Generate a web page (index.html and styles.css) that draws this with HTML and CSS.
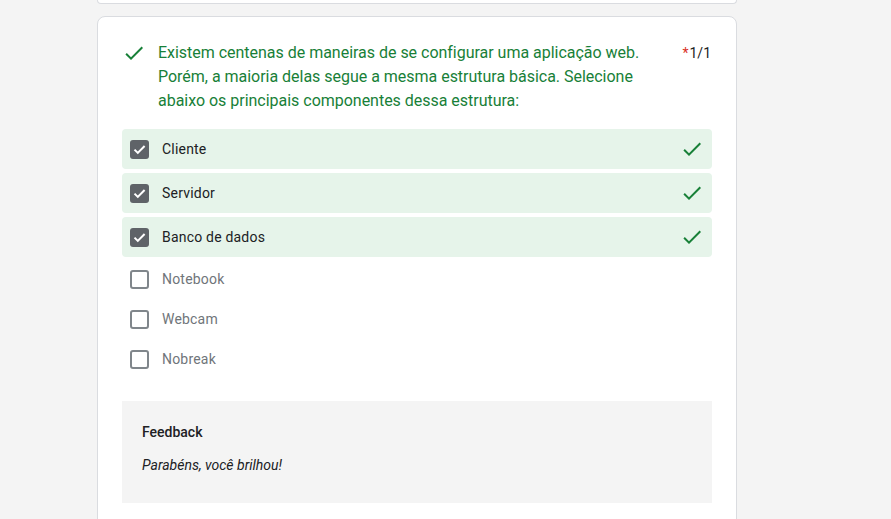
FILE: index.html
```html
<!DOCTYPE html>
<html lang="pt">
<head>
<meta charset="utf-8">
<link rel="stylesheet" href="styles.css">
</head>
<body>
<div class="column">
  <div class="card-prev"></div>
  <div class="card">
    <div class="q-head">
      <svg class="q-icon" viewBox="0 0 24 24" width="24" height="24"><path d="M9 16.17L4.83 12l-1.42 1.41L9 19 21 7l-1.41-1.41z" fill="#188038"/></svg>
      <div class="q-title">Existem centenas de maneiras de se configurar uma aplicação web. Porém, a maioria delas segue a mesma estrutura básica. Selecione abaixo os principais componentes dessa estrutura:</div>
      <div class="q-points"><span class="req">*</span>1/1</div>
    </div>
    <div class="options">
      <div class="opt correct">
        <span class="box checked"><svg viewBox="0 0 19 19" width="19" height="19"><path d="M4.5 9.6l3.3 3.3 6.8-6.9" fill="none" stroke="#fff" stroke-width="2"/></svg></span>
        <span class="label">Cliente</span>
        <svg class="mark" viewBox="0 0 24 24" width="24" height="24"><path d="M9 16.17L4.83 12l-1.42 1.41L9 19 21 7l-1.41-1.41z" fill="#188038"/></svg>
      </div>
      <div class="opt correct">
        <span class="box checked"><svg viewBox="0 0 19 19" width="19" height="19"><path d="M4.5 9.6l3.3 3.3 6.8-6.9" fill="none" stroke="#fff" stroke-width="2"/></svg></span>
        <span class="label">Servidor</span>
        <svg class="mark" viewBox="0 0 24 24" width="24" height="24"><path d="M9 16.17L4.83 12l-1.42 1.41L9 19 21 7l-1.41-1.41z" fill="#188038"/></svg>
      </div>
      <div class="opt correct">
        <span class="box checked"><svg viewBox="0 0 19 19" width="19" height="19"><path d="M4.5 9.6l3.3 3.3 6.8-6.9" fill="none" stroke="#fff" stroke-width="2"/></svg></span>
        <span class="label">Banco de dados</span>
        <svg class="mark" viewBox="0 0 24 24" width="24" height="24"><path d="M9 16.17L4.83 12l-1.42 1.41L9 19 21 7l-1.41-1.41z" fill="#188038"/></svg>
      </div>
      <div class="opt">
        <span class="box"></span>
        <span class="label muted">Notebook</span>
      </div>
      <div class="opt">
        <span class="box"></span>
        <span class="label muted">Webcam</span>
      </div>
      <div class="opt">
        <span class="box"></span>
        <span class="label muted">Nobreak</span>
      </div>
    </div>
    <div class="feedback">
      <div class="fb-title">Feedback</div>
      <div class="fb-text">Parabéns, você brilhou!</div>
    </div>
  </div>
</div>
</body>
</html>
```
FILE: styles.css
```css
html, body {
  margin: 0;
  padding: 0;
  background: #f4f4f4;
  font-family: Roboto, "Liberation Sans", Arial, sans-serif;
  color: #202124;
}
body {
  height: 519px;
  overflow: hidden;
}
.column {
  width: 640px;
  margin-left: 97px;
  display: flex;
  flex-direction: column;
}
.card-prev {
  height: 3px;
  background: #fff;
  border: 1px solid #dadce0;
  border-top: none;
  border-radius: 0 0 8px 8px;
  margin-bottom: 12px;
}
.card {
  background: #fff;
  border: 1px solid #dadce0;
  border-radius: 8px;
  padding: 24px 24px 40px;
}
.q-head {
  display: flex;
  align-items: flex-start;
}
.q-icon {
  flex: none;
  margin-right: 12px;
}
.q-title {
  width: 500px;
  font-size: 16px;
  line-height: 24px;
  color: #188038;
  letter-spacing: -0.02px;
}
.q-points {
  margin-left: auto;
  font-size: 14px;
  line-height: 24px;
  color: #202124;
  padding-right: 1px;
}
.req {
  color: #d93025;
  margin-right: 1px;
}
.options {
  margin-top: 16px;
  display: flex;
  flex-direction: column;
  gap: 4px;
}
.opt {
  display: flex;
  align-items: center;
  height: 36px;
  padding: 0 8px 0 8px;
  border-radius: 4px;
}
.opt.correct {
  height: 40px;
  background: #e6f4ea;
}
.box {
  flex: none;
  width: 19px;
  height: 19px;
  box-sizing: border-box;
  border: 2px solid #80868b;
  border-radius: 3px;
  margin-right: 13px;
}
.box.checked {
  border: none;
  background: #5f6368;
}
.box svg {
  display: block;
}
.label {
  font-size: 14px;
  letter-spacing: 0.2px;
  color: #202124;
}
.label.muted {
  color: #70757a;
}
.mark {
  margin-left: auto;
}
.feedback {
  margin-top: 24px;
  background: #f4f4f4;
  padding: 20px 20px 27px;
}
.fb-title {
  font-size: 14px;
  line-height: 22px;
  font-weight: 500;
  color: #202124;
}
.fb-text {
  margin-top: 11px;
  font-size: 14px;
  line-height: 22px;
  font-style: italic;
  color: #202124;
}
```
